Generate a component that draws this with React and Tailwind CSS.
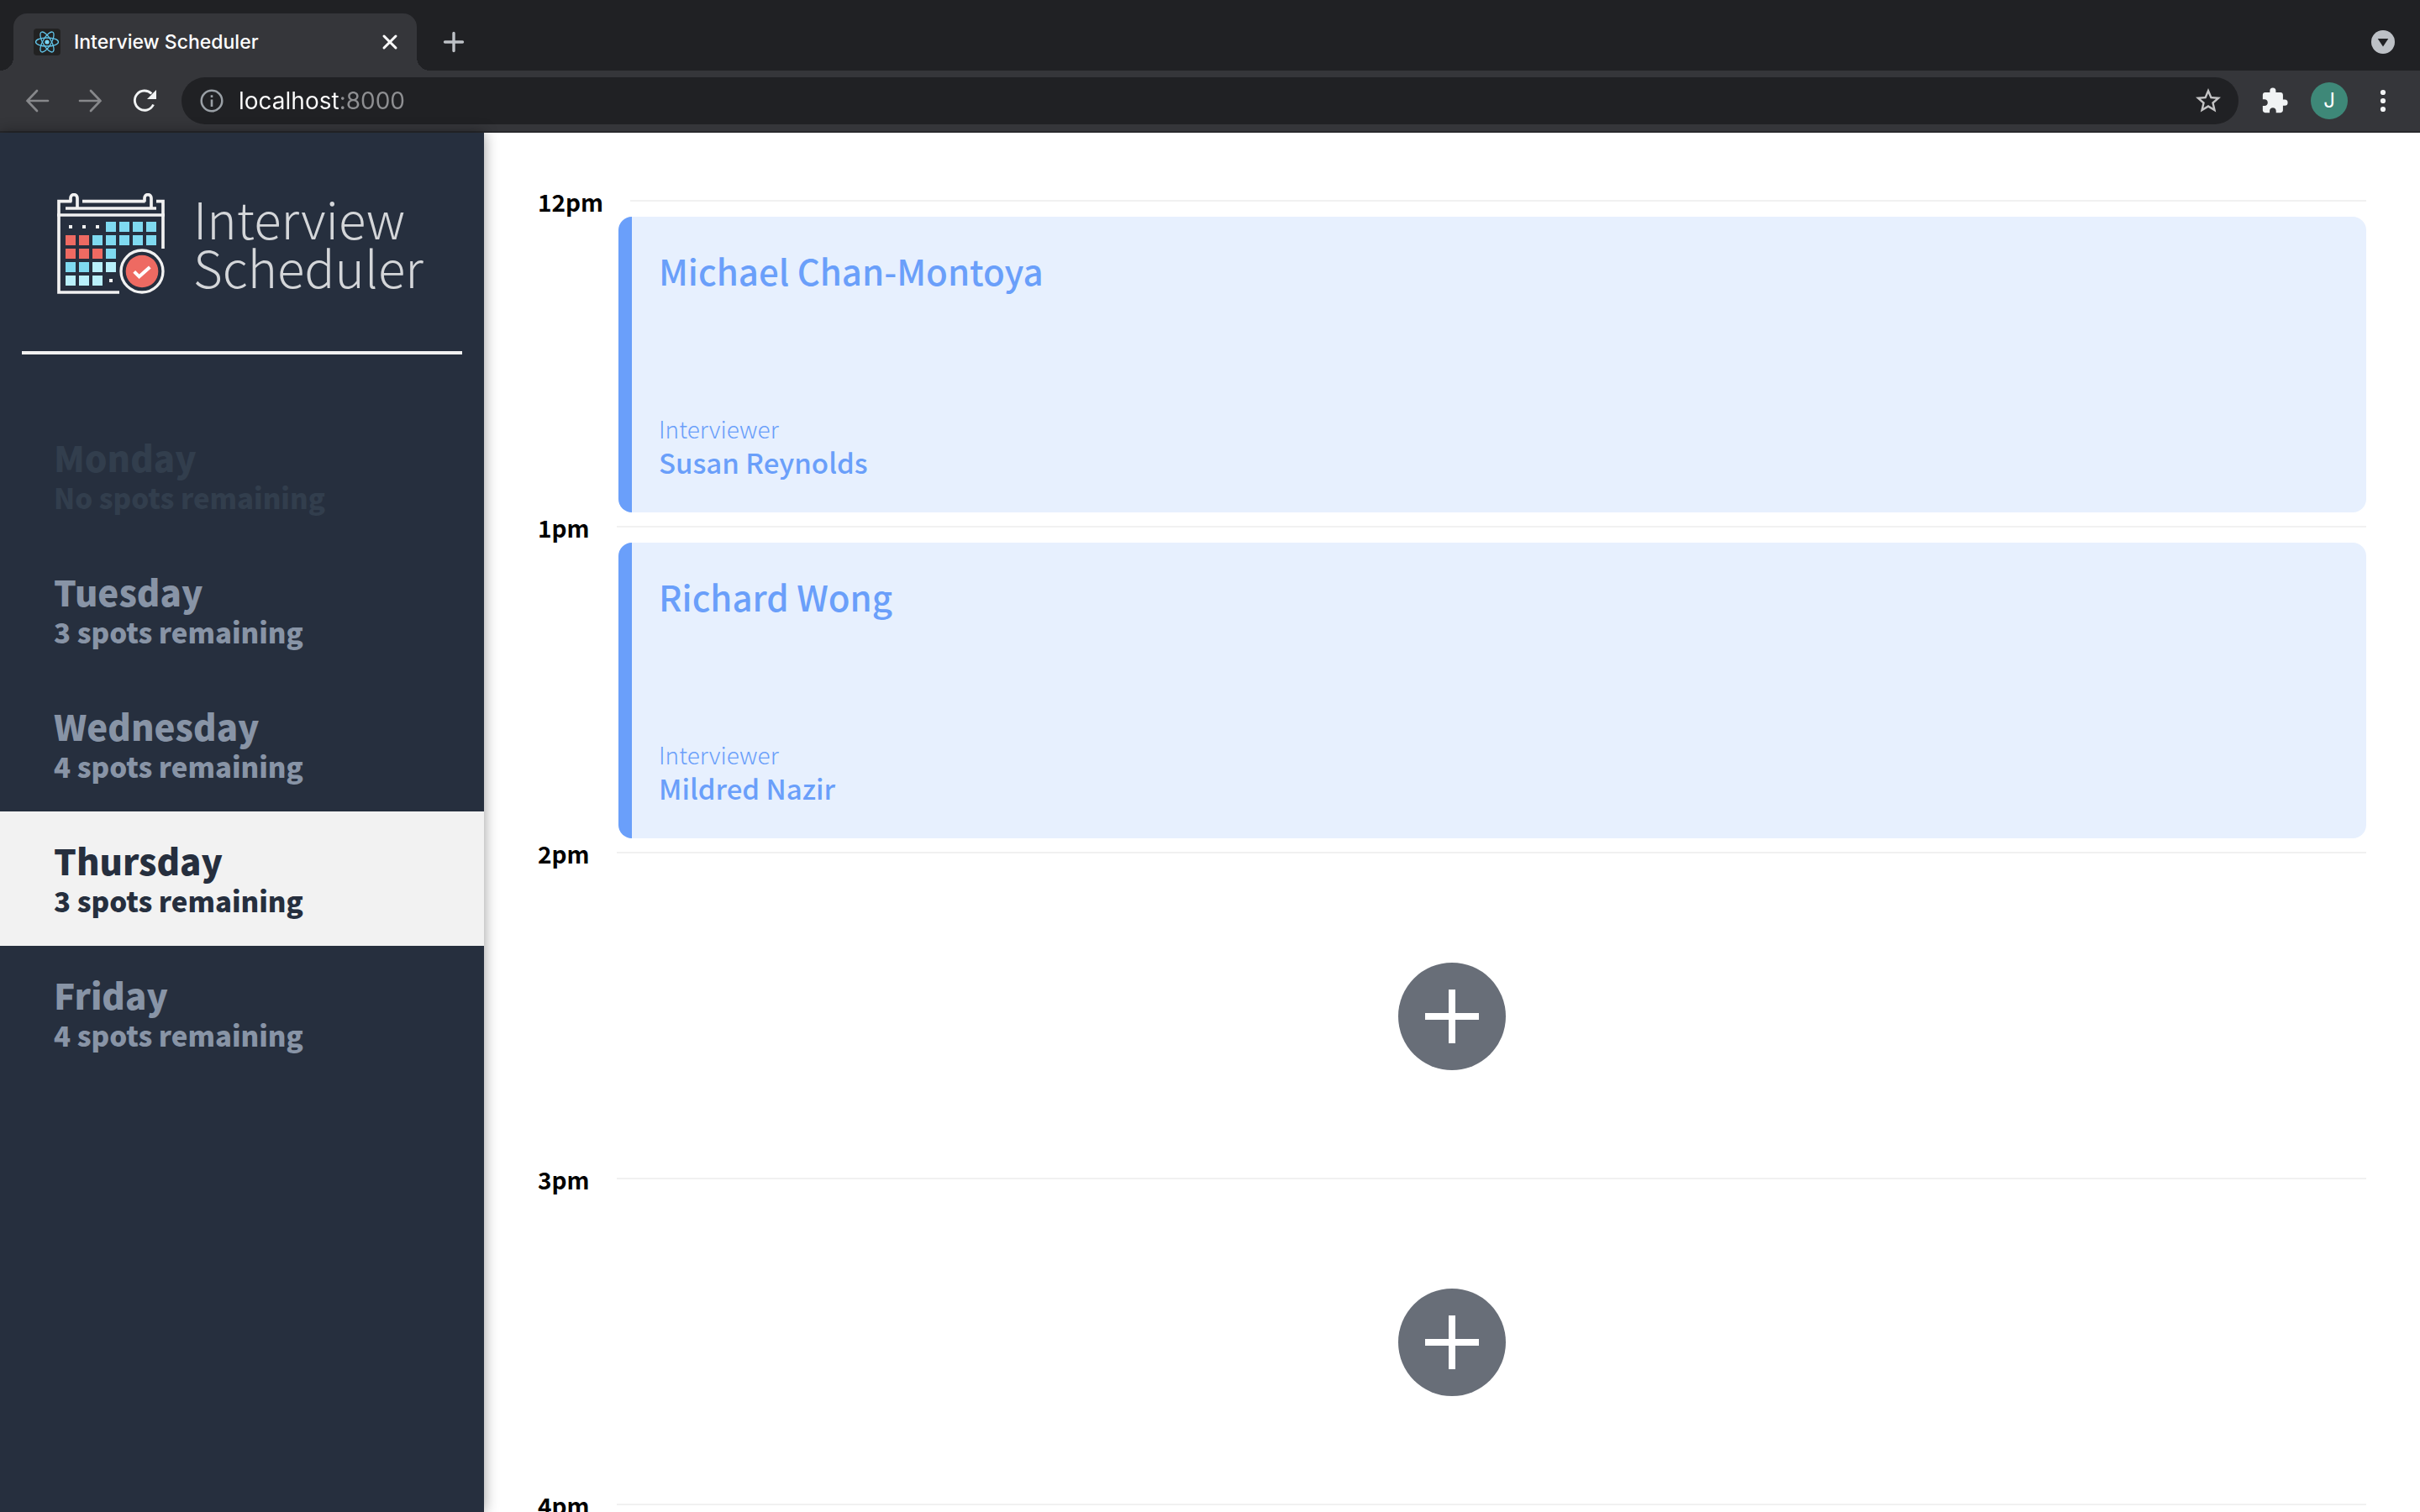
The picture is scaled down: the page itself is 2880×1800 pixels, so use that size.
import React from "react";
import { MdExtension } from "react-icons/md";

const DAYS = [
  { name: "Monday", spots: "No spots remaining", state: "full" },
  { name: "Tuesday", spots: "3 spots remaining", state: "open" },
  { name: "Wednesday", spots: "4 spots remaining", state: "open" },
  { name: "Thursday", spots: "3 spots remaining", state: "selected" },
  { name: "Friday", spots: "4 spots remaining", state: "open" },
];

const DAY_STYLES = {
  full: "text-[#323e4d]",
  open: "text-[#8894a6]",
  selected: "bg-[#f2f2f2] text-[#262f3e]",
};

const SLOTS = [
  { time: "12pm", student: "Michael Chan-Montoya", interviewer: "Susan Reynolds" },
  { time: "1pm", student: "Richard Wong", interviewer: "Mildred Nazir" },
  { time: "2pm" },
  { time: "3pm" },
  { time: "4pm" },
];

function ReactMark() {
  return (
    <svg viewBox="0 0 32 32" className="h-8 w-8" aria-hidden="true">
      <rect width="32" height="32" rx="4" fill="#222" />
      <g fill="none" stroke="#61c5ea" strokeWidth="1.3">
        <ellipse cx="16" cy="16" rx="13.5" ry="5" />
        <ellipse cx="16" cy="16" rx="13.5" ry="5" transform="rotate(60 16 16)" />
        <ellipse cx="16" cy="16" rx="13.5" ry="5" transform="rotate(120 16 16)" />
      </g>
      <circle cx="16" cy="16" r="2.6" fill="#7ad6f5" />
    </svg>
  );
}

function Stroke({ d, width = 2.5 }) {
  return (
    <svg viewBox="0 0 32 32" className="h-8 w-8" fill="none" stroke="currentColor" strokeWidth={width} strokeLinecap="round" aria-hidden="true">
      <path d={d} />
    </svg>
  );
}

function TabStrip() {
  return (
    <div className="flex h-21 items-end justify-between bg-[#202124] pr-7">
      <div className="flex items-end">
        <div className="h-4 w-4 bg-[radial-gradient(circle_at_0_0,#202124_16px,#35363a_16px)]" />
        <div className="flex h-17 w-[480px] items-center rounded-t-2xl bg-[#35363a] pr-4 pl-6">
          <ReactMark />
          <span className="ml-4 flex-1 text-[23px] font-medium text-white">Interview Scheduler</span>
          <button type="button" aria-label="Close tab" className="text-white">
            <Stroke d="M9 9 L23 23 M23 9 L9 23" width={3} />
          </button>
        </div>
        <div className="h-4 w-4 bg-[radial-gradient(circle_at_100%_0,#202124_16px,#35363a_16px)]" />
        <button type="button" aria-label="New tab" className="mb-[18px] ml-3 text-[#bdc1c6]">
          <Stroke d="M16 5.5 V26.5 M5.5 16 H26.5" width={3.4} />
        </button>
      </div>
      <button type="button" aria-label="Search tabs" className="mb-[18px]">
        <svg viewBox="0 0 32 32" className="h-8 w-8" aria-hidden="true">
          <circle cx="16" cy="16" r="14" fill="#bdc1c6" />
          <path d="M9.7 12 H22.3 L16 21.5 Z" fill="#202124" />
        </svg>
      </button>
    </div>
  );
}

function Toolbar() {
  return (
    <div className="flex h-[74px] items-center border-b-2 border-[#28292c] bg-[#35363a] pr-7 pl-7">
      <button type="button" aria-label="Back" className="text-[#87888b]">
        <Stroke d="M29 16 H4.5 M16 4 L4.5 16 L16 28" width={2.7} />
      </button>
      <button type="button" aria-label="Forward" className="ml-8 text-[#87888b]">
        <Stroke d="M3 16 H27.5 M16 4 L27.5 16 L16 28" width={2.7} />
      </button>
      <button type="button" aria-label="Reload" className="ml-8 text-[#f1f3f4]">
        <svg viewBox="0 0 32 32" className="h-8 w-8" aria-hidden="true">
          <path d="M26.5 20.5 A11.6 11.6 0 1 1 24.3 7.6" fill="none" stroke="currentColor" strokeWidth="2.9" />
          <path d="M30 3 V14 H19 Z" fill="currentColor" />
        </svg>
      </button>
      <div className="ml-7 flex h-14 min-w-0 flex-1 items-center rounded-full bg-[#202124] pr-[18px] pl-5">
        <svg viewBox="0 0 32 32" className="h-8 w-8 text-[#9aa0a6]" aria-hidden="true">
          <circle cx="16" cy="16" r="12.3" fill="none" stroke="currentColor" strokeWidth="2.5" />
          <path d="M14.7 14.5 H17.3 V23 H14.7 Z M14.7 9.3 H17.3 V12 H14.7 Z" fill="currentColor" />
        </svg>
        <input
          type="text"
          aria-label="Address"
          defaultValue="localhost:8000"
          className="ml-4 min-w-0 flex-1 bg-[linear-gradient(to_right,#ffffff_119px,#8e8f92_119px)] bg-clip-text text-[28px] text-transparent outline-none"
        />
        <button type="button" aria-label="Bookmark this page" className="text-[#c4c4c5]">
          <svg viewBox="0 0 24 24" className="h-9 w-9" fill="currentColor" aria-hidden="true">
            <path d="m22 9.24-7.19-.62L12 2 9.19 8.63 2 9.24l5.46 4.73L5.82 21 12 17.27 18.18 21l-1.63-7.03L22 9.24zM12 15.4l-3.76 2.27 1-4.28-3.32-2.88 4.38-.38L12 6.1l1.71 4.04 4.38.38-3.32 2.88 1 4.28L12 15.4z" />
          </svg>
        </button>
      </div>
      <button type="button" aria-label="Extensions" className="ml-[26px] text-[#f1f3f4]">
        <MdExtension size={34} />
      </button>
      <button type="button" aria-label="Profile" className="ml-[26px] flex h-11 w-11 items-center justify-center rounded-full bg-[#3e8878] text-2xl text-white">
        J
      </button>
      <button type="button" aria-label="Menu" className="ml-[26px] text-[#f1f3f4]">
        <svg viewBox="0 0 32 32" className="h-8 w-8" fill="currentColor" aria-hidden="true">
          <circle cx="16" cy="6" r="3.1" />
          <circle cx="16" cy="16" r="3.1" />
          <circle cx="16" cy="26" r="3.1" />
        </svg>
      </button>
    </div>
  );
}

const CELL_COLORS = { r: "#ee6a62", b: "#7fdaf0", l: "#b9f0fb" };
const CELL_ROWS = ["...bbbb", "rrbbbbb", "rrrb", "bbll", "lll."];

function CalendarMark() {
  return (
    <svg viewBox="54 45 384 360" className="h-[120px] w-32" aria-hidden="true">
      <g fill="none" stroke="#f1f1f1" strokeWidth="11">
        <path d="M106 74 H60 V399 H276 M408 74 H432 V243 M144 74 H368 M84 99 H408 M54 123 H438" />
        <path d="M102 76 V62 a12 12 0 0 1 24 0 V99 M366 76 V62 a12 12 0 0 1 24 0 V99" />
      </g>
      {CELL_ROWS.flatMap((row, y) =>
        [...row].map((cell, x) =>
          cell === "." ? (
            <rect key={`${x}-${y}`} x={96 + x * 48} y={159 + y * 48} width="12" height="12" fill="#f1f1f1" />
          ) : (
            <rect key={`${x}-${y}`} x={84 + x * 48} y={147 + y * 48} width="36" height="36" fill={CELL_COLORS[cell]} />
          )
        )
      )}
      <circle cx="357" cy="324" r="75" fill="none" stroke="#f1f1f1" strokeWidth="10" />
      <circle cx="357" cy="324" r="58" fill="#ee6a62" />
      <path d="M329 325 L347 343 L385 309" fill="none" stroke="#fff" strokeWidth="12" />
    </svg>
  );
}

function Sidebar() {
  return (
    <aside className="relative z-10 flex w-1/5 shrink-0 flex-col bg-[#262f3e] shadow-[0_0_16px_rgba(0,0,0,0.4)]">
      <div className="mt-18 flex items-start gap-[34px] pl-17">
        <CalendarMark />
        <div className="text-[60px] leading-[58px] font-light text-[#d4d6d9]">
          <div>Interview</div>
          <div>Scheduler</div>
        </div>
      </div>
      <hr className="mx-[26px] mt-17 h-1 border-0 bg-[#f1f1f1]" />
      <nav className="mt-16 flex flex-col">
        {DAYS.map((day) => (
          <button
            key={day.name}
            type="button"
            aria-pressed={day.state === "selected"}
            className={`px-16 pt-[34px] pb-[30px] text-left font-black ${DAY_STYLES[day.state]}`}
          >
            <span className="block text-[42px] leading-12">{day.name}</span>
            <span className="block text-[33px] leading-12">{day.spots}</span>
          </button>
        ))}
      </nav>
    </aside>
  );
}

function Slot({ time, student, interviewer }) {
  return (
    <article className="flex flex-col">
      <header className="flex h-9">
        <h4 className="min-w-[94px] shrink-0 pr-8 text-[28px] leading-9 font-semibold text-black">{time}</h4>
        <div className="mt-4 h-0.5 flex-1 bg-[#f1f1f1]" />
      </header>
      {student ? (
        <div className="ml-24 flex h-[352px] flex-col justify-between rounded-2xl border-l-16 border-[#6a9ffa] bg-[#e7f0fe] px-8 py-10 text-[#6a9ffa]">
          <h2 className="text-[42px] leading-12 font-medium">{student}</h2>
          <div>
            <h4 className="text-[28px] leading-10 font-light">Interviewer</h4>
            <h3 className="text-[33px] leading-10 font-medium">{interviewer}</h3>
          </div>
        </div>
      ) : (
        <div className="flex h-[352px] items-center justify-center">
          <button type="button" aria-label={`Add appointment at ${time}`} className="h-32 w-32 rounded-full bg-[#686e78]">
            <svg viewBox="0 0 128 128" className="h-32 w-32" fill="none" stroke="#fff" strokeWidth="8" aria-hidden="true">
              <path d="M64 32 V96 M32 64 H96" />
            </svg>
          </button>
        </div>
      )}
    </article>
  );
}

export default function App() {
  return (
    <div className="flex h-screen flex-col overflow-hidden bg-white">
      <header className="shrink-0 font-[Inter,sans-serif]">
        <TabStrip />
        <Toolbar />
      </header>
      <div className="flex min-h-0 flex-1 font-['Noto_Sans_CJK_SC',sans-serif]">
        <Sidebar />
        <main className="min-w-0 flex-1 overflow-hidden px-16 pt-16">
          {SLOTS.map((slot) => (
            <Slot key={slot.time} {...slot} />
          ))}
        </main>
      </div>
    </div>
  );
}
